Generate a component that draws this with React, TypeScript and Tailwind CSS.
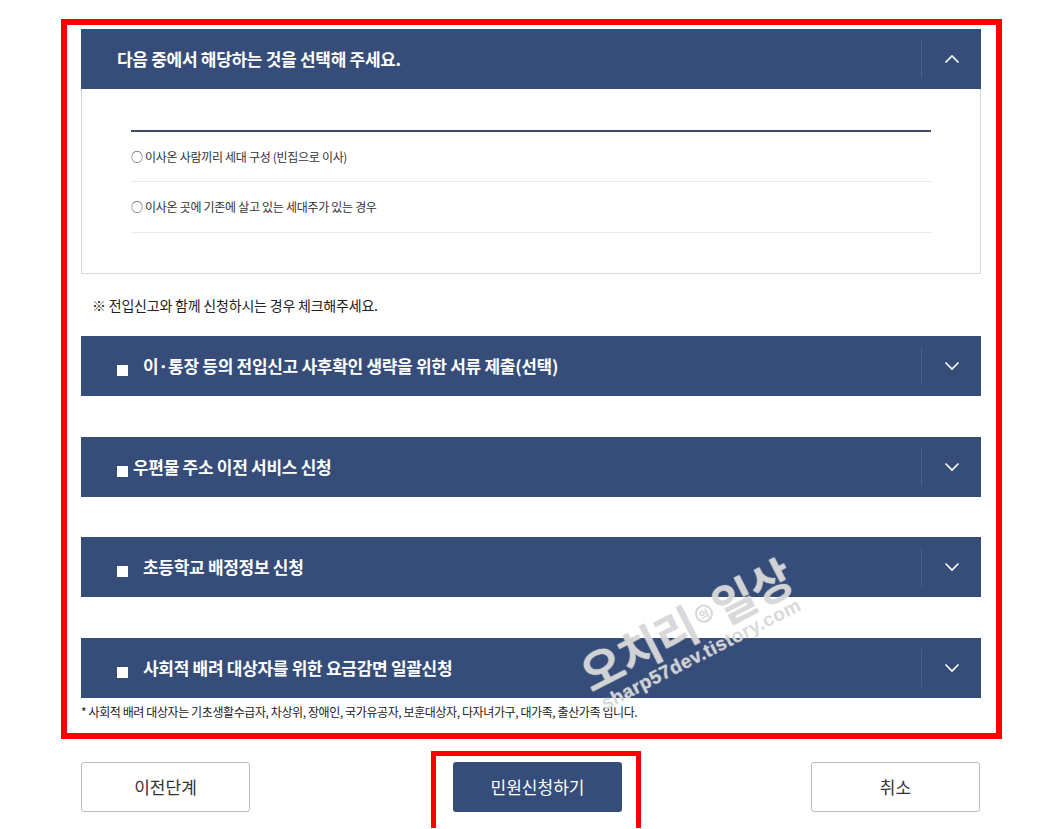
import React from "react";

const FONT = { fontFamily: '"Noto Sans CJK KR", "Noto Sans", sans-serif' };

function Chevron({ up }: { up?: boolean }) {
  return (
    <svg width="16" height="10" viewBox="0 0 16 10" fill="none">
      {up ? (
        <polyline points="1.5,8.5 8,2 14.5,8.5" stroke="white" strokeWidth="1.6" />
      ) : (
        <polyline points="1.5,1.5 8,8 14.5,1.5" stroke="white" strokeWidth="1.6" />
      )}
    </svg>
  );
}

function HeaderBar({
  title,
  up,
  square,
  tight,
}: {
  title: string;
  up?: boolean;
  square?: boolean;
  tight?: boolean;
}) {
  return (
    <div className="flex h-[60px] items-stretch bg-[#354d78]">
      <div className="flex flex-1 items-center pl-[36px]">
        {square && (
          <span
            className={`mt-[9px] block h-[11px] w-[11px] bg-white ${tight ? "mr-[5px]" : "mr-[15px]"}`}
          />
        )}
        <span className="text-[17px] font-bold tracking-[-0.3px] text-white">{title}</span>
      </div>
      <div className="my-[11px] w-px bg-[#4a6189]" />
      <div className="flex w-[59px] items-center justify-center">
        <Chevron up={up} />
      </div>
    </div>
  );
}

export default function App() {
  return (
    <div className="relative min-h-[829px] w-full bg-white" style={FONT}>
      <div className="ml-[61px] mt-[19px] w-[941px] border-[6px] border-[#ff0000] pb-[13px] pl-[14px] pr-[15px] pt-[4px]">
        <HeaderBar title="다음 중에서 해당하는 것을 선택해 주세요." up />
        <div className="border border-t-0 border-[#d6d6d6] px-[49px] pb-[40px] pt-[41px]">
          <div className="h-[2px] bg-[#3e4a62]" />
          <div className="flex h-[50px] items-center border-b border-[#e8e8e8] text-[12px] tracking-[-0.3px] text-[#333]">
            ○ 이사온 사람끼리 세대 구성 (빈집으로 이사)
          </div>
          <div className="flex h-[51px] items-center border-b border-[#e8e8e8] text-[12px] tracking-[-0.3px] text-[#333]">
            ○ 이사온 곳에 기존에 살고 있는 세대주가 있는 경우
          </div>
        </div>
        <div className="mt-[22px] pl-[11px] text-[14px] leading-[18px] tracking-[-0.2px] text-[#222]">
          ※ 전입신고와 함께 신청하시는 경우 체크해주세요.
        </div>
        <div className="mt-[22px] flex flex-col">
          <HeaderBar title="이·통장 등의 전입신고 사후확인 생략을 위한 서류 제출(선택)" square />
          <div className="mt-[41px]">
            <HeaderBar title="우편물 주소 이전 서비스 신청" square tight />
          </div>
          <div className="mt-[40px]">
            <HeaderBar title="초등학교 배정정보 신청" square />
          </div>
          <div className="mt-[41px]">
            <HeaderBar title="사회적 배려 대상자를 위한 요금감면 일괄신청" square />
          </div>
        </div>
        <div className="mt-[6px] text-[12px] leading-[16px] tracking-[-0.4px] text-[#222]">
          * 사회적 배려 대상자는 기초생활수급자, 차상위, 장애인, 국가유공자, 보훈대상자, 다자녀가구, 대가족, 출산가족 입니다.
        </div>
      </div>

      <div className="flex items-start pl-[81px]">
        <button className="mt-[23px] h-[50px] w-[169px] rounded-[3px] border border-[#bdbdbd] bg-white text-[17px] text-[#333]">
          이전단계
        </button>
        <div className="ml-[181px] mt-[12px] h-[77px] w-[210px] border-[5px] border-b-0 border-[#ff0000] pl-[17px] pt-[6px]">
          <button className="h-[50px] w-[169px] rounded-[3px] bg-[#354d78] text-[17px] text-white">
            민원신청하기
          </button>
        </div>
        <button className="ml-[170px] mt-[23px] h-[50px] w-[169px] rounded-[3px] border border-[#bdbdbd] bg-white text-[17px] text-[#333]">
          취소
        </button>
      </div>

      <div
        className="pointer-events-none absolute left-[560px] top-[580px] w-[260px] rotate-[-27deg] select-none font-bold leading-none"
        style={{ color: "rgba(200,200,200,0.7)", textShadow: "0 0 1px rgba(255,255,255,0.9)" }}
      >
        <div className="flex items-end justify-center">
          <span className="text-[46px] tracking-[-1px]">오치리</span>
          <span className="mx-[3px] mb-[14px] flex h-[18px] w-[18px] items-center justify-center rounded-full border-2 border-[rgba(200,200,200,0.7)] text-[11px]">
            의
          </span>
          <span className="text-[46px] tracking-[-1px]">일상</span>
        </div>
        <div
          className="mt-[2px] text-center text-[19px] tracking-[0.5px]"
          style={{ fontFamily: '"Liberation Sans", sans-serif' }}
        >
          sharp57dev.tistory.com
        </div>
      </div>
    </div>
  );
}
